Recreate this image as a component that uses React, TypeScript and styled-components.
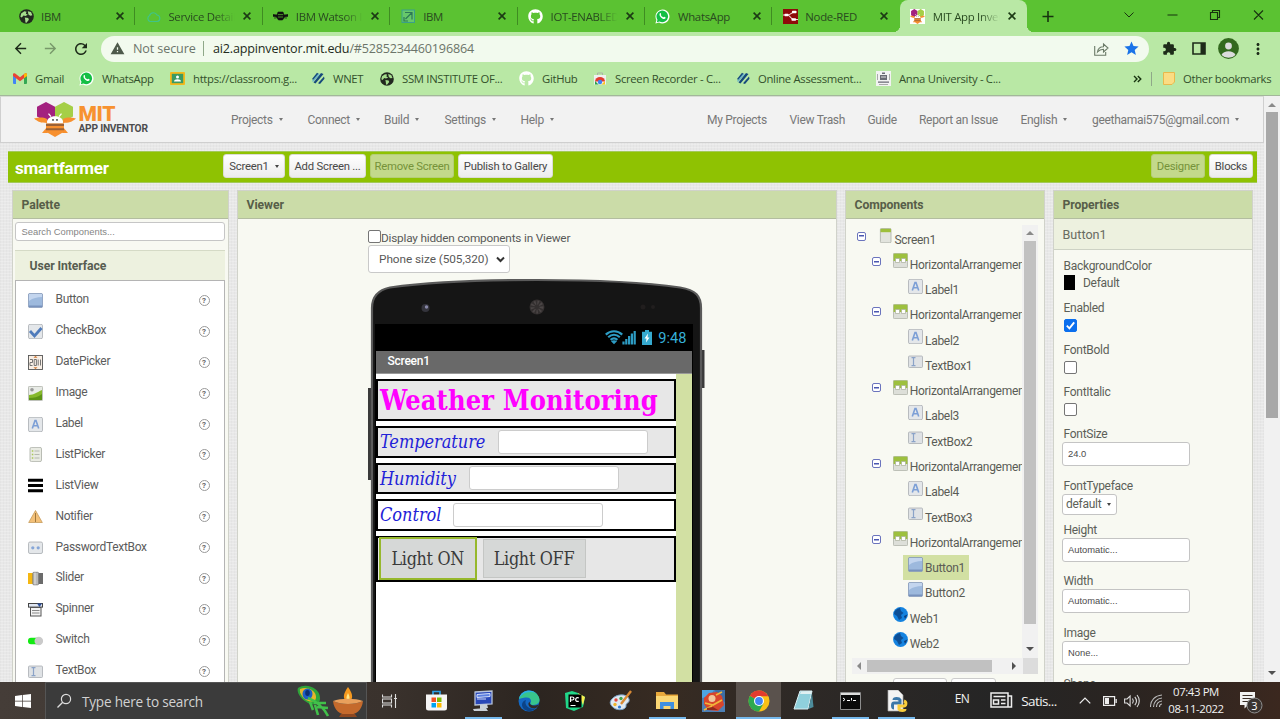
import React from "react";
import styled, { createGlobalStyle, css } from "styled-components";
import { FaGithub } from "react-icons/fa";
import {
  MdArrowBack, MdArrowForward, MdRefresh, MdWarning, MdStar, MdExtension, MdMoreVert,
} from "react-icons/md";

const UI = `"Open Sans", "Noto Sans", sans-serif`;
const BODY = `Roboto, "Liberation Sans", sans-serif`;
const SERIF = `"DejaVu Serif Condensed", "DejaVu Serif", serif`;

const Global = createGlobalStyle`
  *, *::before, *::after { box-sizing: border-box; }
  html, body { margin: 0; padding: 0; overflow: hidden; background: #2b2623; }
  svg { display: block; flex: none; }
`;

const Desktop = styled.div`
  width: 1280px;
  height: 719px;
  display: flex;
  flex-direction: column;
  overflow: hidden;
  font-family: ${BODY};
  white-space: nowrap;
`;

/* ---------- browser chrome ---------- */
const TabStrip = styled.div`
  height: 32px;
  background: #5bc232;
  padding-left: 8px;
  display: flex;
  font-family: ${UI};
`;
const Tab = styled.div<{ $active?: boolean; $last?: boolean }>`
  width: 127.4px;
  height: 32px;
  flex: none;
  padding-left: 10.5px;
  display: flex;
  align-items: center;
  position: relative;
  ${(p) => p.$active ? css`
    background: #b9e8a5;
    border-radius: 8px 8px 0 0;
    &::before, &::after {
      content: "";
      position: absolute;
      bottom: 0;
      width: 7px;
      height: 7px;
    }
    &::before { left: -7px; background: radial-gradient(circle at 0 0, transparent 7px, #b9e8a5 7.3px); }
    &::after { right: -7px; background: radial-gradient(circle at 100% 0, transparent 7px, #b9e8a5 7.3px); }
  ` : !p.$last && css`
    &::after { content: ""; position: absolute; right: 0; top: 7px; width: 1px; height: 18px; background: #3f8c22; }
  `}
`;
const TabTitle = styled.span<{ $fade?: boolean }>`
  width: 68px;
  margin-left: 7.5px;
  margin-right: 7px;
  overflow: hidden;
  font-size: 11.4px;
  letter-spacing: -0.3px;
  color: #294a20;
  ${(p) => p.$fade && css`
    -webkit-mask-image: linear-gradient(90deg, #000 70%, transparent 98%);
    mask-image: linear-gradient(90deg, #000 70%, transparent 98%);
  `}
`;
const WindowButtons = styled.div`
  display: flex;
  align-items: center;
  margin-left: 14px;
  padding-bottom: 3px;
`;
const NewTab = styled.span`
  margin-right: 69px;
  padding-top: 4px;
`;
const TabSearch = styled.span`
  margin-right: 22px;
`;
const Toolbar = styled.div`
  height: 32px;
  background: #b9e8a5;
  display: flex;
  align-items: center;
  padding: 1px 0 0 12px;
  color: #1d2b19;
  font-family: ${UI};
`;
const ToolSlot = styled.span<{ $w: number; $dim?: boolean; $pad?: number }>`
  width: ${(p) => p.$w}px;
  padding-left: ${(p) => p.$pad ?? 0}px;
  flex: none;
  display: flex;
  opacity: ${(p) => (p.$dim ? 0.42 : 1)};
`;
const Address = styled.div`
  width: 1048px;
  height: 26px;
  flex: none;
  border-radius: 13px;
  background: #f2faee;
  display: flex;
  align-items: center;
  padding: 0 9px 0 9px;
  font-size: 12.6px;
  color: #6c756a;
`;
const NotSecure = styled.span`
  margin-left: 8px;
  width: 70px;
  letter-spacing: -0.12px;
`;
const Divider = styled.span<{ $h: number; $m: number }>`
  width: 1px;
  height: ${(p) => p.$h}px;
  background: #8fa889;
  margin-right: ${(p) => p.$m}px;
`;
const Url = styled.span`
  flex: 1;
  letter-spacing: -0.19px;
  b { font-weight: 400; color: #232b21; }
`;
const Bookmarks = styled.div`
  height: 32px;
  background: #b9e8a5;
  border-bottom: 1px solid #a3b79b;
  padding: 0 0 2px 13px;
  display: flex;
  align-items: center;
  font-family: ${UI};
  font-size: 11.3px;
  color: #33502b;
`;
const Bookmark = styled.div<{ $w: number }>`
  width: ${(p) => p.$w}px;
  flex: none;
  display: flex;
  align-items: center;
  gap: 8px;
  letter-spacing: -0.3px;
`;
const More = styled.span`
  width: 18px;
`;

/* ---------- page ---------- */
const Page = styled.div`
  height: 586px;
  display: flex;
  overflow: hidden;
  background-color: #e8e8e8;
  background-image:
    repeating-linear-gradient(0deg, rgba(255,255,255,0.22) 0 1px, transparent 1px 3px),
    repeating-linear-gradient(90deg, rgba(0,0,0,0.018) 0 1px, transparent 1px 3px);
`;
const Main = styled.div`
  width: 1264px;
  display: flex;
  flex-direction: column;
`;
const Header = styled.header`
  height: 47px;
  flex: none;
  background: #f2f2f2;
  border: 1px solid #cfcfcf;
  border-top-color: #d8ddd5;
  display: flex;
  align-items: center;
  padding-left: 33px;
`;
const LogoText = styled.div`
  margin-left: 2.5px;
  width: 152.5px;
  padding-top: 1px;
`;
const Mit = styled.div`
  font: 900 21px/19px ${BODY};
  height: 18px;
  color: #f79230;
  letter-spacing: -0.3px;
`;
const AppInventor = styled.div`
  font: 700 10.2px/12px ${BODY};
  color: #4d4d4f;
  letter-spacing: -0.22px;
`;
const NavItem = styled.span<{ $w: number }>`
  width: ${(p) => p.$w}px;
  flex: none;
  font-size: 12px;
  letter-spacing: -0.3px;
  color: #787878;
  display: flex;
  align-items: center;
`;
const Caret = styled.i<{ $dark?: boolean }>`
  margin-left: 6px;
  border: 2.6px solid transparent;
  border-top: 3px solid ${(p) => (p.$dark ? "#444" : "#777")};
  border-bottom: 0;
`;
const ProjectBar = styled.div`
  margin: 8px 7px 7px 8px;
  height: 32px;
  flex: none;
  background: #8fc202;
  border: 1px solid #a3c95a;
  border-width: 1px 0;
  display: flex;
  align-items: center;
  gap: 4px;
  padding: 0 4px 2px 7px;
`;
const ProjectName = styled.span`
  width: 204px;
  padding-top: 4px;
  color: #fff;
  font-size: 17px;
  font-weight: 700;
  letter-spacing: -0.25px;
`;
const BarButton = styled.span<{ $w: number; $off?: boolean; $push?: boolean }>`
  width: ${(p) => p.$w}px;
  height: 24px;
  display: flex;
  align-items: center;
  justify-content: center;
  border-radius: 3px;
  font-size: 11.3px;
  letter-spacing: -0.22px;
  margin-left: ${(p) => (p.$push ? "auto" : 0)};
  color: ${(p) => (p.$off ? "#75923a" : "#484848")};
  background: ${(p) => (p.$off ? "#c3d98b" : "linear-gradient(#fff, #ececec)")};
  border: 1px solid ${(p) => (p.$off ? "#b5ce77" : "#dcdcd6")};
`;
const Columns = styled.div`
  display: flex;
  gap: 8px;
  padding-left: 11.5px;
  flex: 1;
`;
const Panel = styled.section<{ $w: number }>`
  width: ${(p) => p.$w}px;
  height: 520px;
  flex: none;
  background: #f8f9f2;
  border: 1px solid #d0d2ca;
  display: flex;
  flex-direction: column;
`;
const PanelTitle = styled.div`
  height: 28px;
  flex: none;
  background: #cbdca8;
  border-bottom: 1px solid #b3bda0;
  padding-left: 9px;
  display: flex;
  align-items: center;
  font-size: 12.2px;
  font-weight: 700;
  letter-spacing: -0.08px;
  color: #575e49;
`;

/* palette */
const Search = styled.div`
  height: 19px;
  margin: 3px 3px 0 2px;
  padding-left: 6px;
  border: 1px solid #c6c6c6;
  border-radius: 3px;
  background: #fff;
  font: 9.4px/17px "Liberation Sans", sans-serif;
  color: #858585;
`;
const Category = styled.div`
  height: 30px;
  margin: 9px 3px 0 2px;
  padding-left: 15px;
  background: #edf1df;
  border-top: 1px solid #d5dac6;
  font-size: 12.2px;
  line-height: 30px;
  font-weight: 700;
  letter-spacing: -0.08px;
  color: #575d51;
`;
const PaletteList = styled.div`
  margin: 0 3px 0 2px;
  flex: 1;
  background: #fff;
  border: 1px solid #b4b4b4;
  padding-top: 4px;
`;
const PaletteItem = styled.div`
  height: 30.9px;
  display: flex;
  align-items: center;
  padding: 0 14px 0 12px;
  font-size: 12px;
  letter-spacing: -0.32px;
  color: #5c5c5c;
  span { flex: 1; margin-left: 13px; padding-bottom: 2px; }
`;
const Help = styled.i`
  width: 11px;
  height: 11px;
  border: 1px solid #999;
  border-radius: 50%;
  font: 700 8px/9px ${BODY};
  letter-spacing: 0;
  text-align: center;
  color: #666;
`;

/* viewer */
const ViewerBody = styled.div`
  padding: 9px 0 0 130.5px;
  font-size: 11.8px;
  color: #595959;
`;
const CheckRow = styled.div`
  height: 17px;
  display: flex;
  align-items: center;
  letter-spacing: -0.2px;
`;
const CheckLabel = styled.span`
  padding-top: 3px;
`;
const Check = styled.i<{ $on?: boolean }>`
  width: 13px;
  height: 13px;
  flex: none;
  border: 1px solid ${(p) => (p.$on ? "#0b6fee" : "#757575")};
  border-radius: 2px;
  background: ${(p) => (p.$on ? "#0b6fee" : "#fff")};
`;
const SizeSelect = styled.div`
  width: 142px;
  height: 28px;
  border: 1px solid #c9c9c9;
  border-radius: 3px;
  background: #fff;
  display: flex;
  align-items: center;
  justify-content: space-between;
  padding: 0 4px 0 10px;
  letter-spacing: -0.05px;
`;
const Phone = styled.div`
  position: relative;
  width: 338px;
  height: 420px;
  margin-top: 5px;
  padding: 46px 13px 0 7px;
`;
const Shell = styled.svg`
  position: absolute;
  left: 0;
  top: 0;
`;
const Screen = styled.div`
  position: relative;
  background: #000;
  padding: 0 1px;
`;
const StatusBar = styled.div`
  height: 27px;
  display: flex;
  align-items: center;
  justify-content: flex-end;
  padding-right: 5.5px;
  color: #36b0d8;
  font-size: 14.6px;
  gap: 6px;
`;
const ScreenTitle = styled.div`
  height: 23px;
  background: #696969;
  color: #fff;
  font-size: 12px;
  font-weight: 500;
  letter-spacing: -0.25px;
  line-height: 20px;
  padding-left: 11.5px;
  border-bottom: 1px solid #999;
`;
const Canvas = styled.div`
  height: 330px;
  background: #fff;
  border-right: 16px solid #d2e0a3;
  padding-top: 5px;
  display: flex;
  flex-direction: column;
  gap: 5px;
`;
const Arrangement = styled.div<{ $h: number; $white?: boolean }>`
  height: ${(p) => p.$h}px;
  flex: none;
  border: 2px solid #000;
  background: ${(p) => (p.$white ? "#fff" : "#e7e7e7")};
  display: flex;
  align-items: center;
  padding-left: 2px;
  font-family: ${SERIF};
`;
const Heading = styled.span`
  color: #f0f;
  font-size: 27px;
  font-weight: 700;
  letter-spacing: 0.1px;
  padding-top: 1px;
`;
const FieldLabel = styled.span<{ $w: number }>`
  width: ${(p) => p.$w}px;
  color: #2222d8;
  font-size: 18px;
  font-style: italic;
  letter-spacing: -0.05px;
`;
const Field = styled.span`
  width: 150px;
  height: 24px;
  border: 1px solid #ccc;
  border-radius: 3px;
  background: #fff;
`;
const AppButton = styled.span<{ $w: number; $selected?: boolean }>`
  width: ${(p) => p.$w}px;
  height: ${(p) => (p.$selected ? 43 : 39)}px;
  margin: ${(p) => (p.$selected ? "0 5.5px 0 -1.5px" : "0")};
  display: flex;
  align-items: center;
  justify-content: center;
  background: #d6d8d7;
  border: ${(p) => (p.$selected ? "2px solid #96b82c" : "1px solid #c4c6c4")};
  color: #3a3a3a;
  font-size: 17.8px;
  letter-spacing: -0.3px;
`;

/* components tree */
const TreeArea = styled.div`
  display: flex;
  margin: 6px 6px 0 6px;
  height: 433px;
`;
const Tree = styled.div`
  width: 171px;
  overflow: hidden;
  padding-top: 1px;
`;
const TreeRow = styled.div<{ $depth: number; $leaf?: boolean }>`
  height: 25.27px;
  display: flex;
  align-items: center;
  padding-left: ${(p) => 5.5 + p.$depth * 15.2 + (p.$leaf ? 15.6 : 0)}px;
  font-size: 12px;
  color: #5a5c56;
`;
const Toggle = styled.i<{ $gap: number }>`
  width: 9px;
  height: 9px;
  flex: none;
  margin: -5px ${(p) => p.$gap}px 0 0;
  border: 1px solid #6b74bd;
  border-radius: 2px;
  background: linear-gradient(#4a57b0, #4a57b0) center / 5px 1.5px no-repeat #fff;
`;
const TreeNode = styled.span<{ $selected?: boolean }>`
  height: 25px;
  padding: 0 4px 0 5px;
  display: flex;
  align-items: center;
  gap: 2px;
  letter-spacing: -0.3px;
  background: ${(p) => (p.$selected ? "#d2e0a3" : "transparent")};
  svg { margin-top: -6px; }
  b { font-weight: 400; padding-top: 2px; }
`;
const VScroll = styled.div<{ $pad: number }>`
  width: 16px;
  flex: none;
  background: #f1f1f1;
  display: flex;
  flex-direction: column;
  align-items: center;
  padding: ${(p) => p.$pad}px 0 5px;
`;
const Thumb = styled.i<{ $h: number; $tone: string; $gap: number }>`
  width: 12px;
  height: ${(p) => p.$h}px;
  background: ${(p) => p.$tone};
  margin: ${(p) => p.$gap}px 0 auto;
`;
const HScroll = styled.div`
  height: 16px;
  flex: none;
  margin: 0 6px;
  background: linear-gradient(90deg, #f1f1f1 171px, #dcdcdc 171px);
  display: flex;
  align-items: center;
  padding: 0 20px 0 3px;
  i { width: 125px; height: 12px; background: #c1c1c1; margin: 0 auto 0 4px; }
`;
const TreeButtons = styled.div`
  display: flex;
  gap: 4px;
  padding: 4px 0 0 47.5px;
`;
const TreeButton = styled.span<{ $w: number }>`
  width: ${(p) => p.$w}px;
  height: 24px;
  border: 1px solid #ccc;
  border-radius: 3px;
  background: #fff;
`;

/* properties */
const Selected = styled.div`
  height: 31px;
  flex: none;
  background: #edf1df;
  border-bottom: 1px solid #cdd2c4;
  padding-left: 9px;
  line-height: 31px;
  font-size: 12.6px;
  color: #686b61;
`;
const Properties = styled.div`
  padding: 8px 0 0 8.5px;
  font-size: 12px;
  letter-spacing: -0.28px;
  color: #5c5f58;
`;
const Prop = styled.div<{ $h: number }>`
  height: ${(p) => p.$h}px;
`;
const PropLabel = styled.div`
  height: 16px;
  line-height: 16px;
  padding-left: 1.5px;
`;
const Colour = styled.div`
  display: flex;
  align-items: center;
  gap: 8px;
  height: 17px;
  padding-left: 2px;
  i { width: 11px; height: 15px; background: #000; }
`;
const PropCheck = styled.div`
  padding: 3px 0 0 2px;
  display: flex;
`;
const Input = styled.div`
  width: 127.5px;
  height: 24px;
  border: 1px solid #c4c4c4;
  border-radius: 3px;
  background: #fff;
  font: 9.4px/22px "Liberation Sans", sans-serif;
  letter-spacing: 0;
  padding-left: 5px;
  color: #4c4c4c;
`;
const Typeface = styled.div`
  width: 55px;
  height: 21px;
  border: 1px solid #c4c4c4;
  border-radius: 3px;
  background: #fff;
  display: flex;
  align-items: center;
  padding-left: 3px;
`;

/* ---------- taskbar ---------- */
const Taskbar = styled.div`
  height: 37px;
  flex: none;
  display: flex;
  align-items: center;
  color: #f2f2f2;
  font-family: ${UI};
  background: linear-gradient(90deg, #453d38 0, #3a322d 30%, #2c2520 42%, #372b22 52%, #2e2926 62%, #252525 78%, #2a2421 88%, #3b281f 100%);
`;
const SearchBox = styled.div`
  width: 322px;
  height: 37px;
  flex: none;
  background: #3b3b3b;
  border: 1px solid #555;
  border-bottom: 0;
  display: flex;
  align-items: center;
  padding-left: 10px;
  font-size: 13.6px;
  color: #d2d2d2;
  span { flex: 1; margin-left: 10px; letter-spacing: -0.22px; }
`;
const Slot = styled.span<{ $w: number; $on?: boolean; $open?: boolean; $pad?: number }>`
  width: ${(p) => p.$w}px;
  height: 37px;
  flex: none;
  padding-left: ${(p) => p.$pad ?? 0}px;
  display: flex;
  align-items: center;
  justify-content: center;
  background: ${(p) => (p.$on ? "#5a524d" : "transparent")};
  background-image: ${(p) => (p.$open ? "linear-gradient(#76b9ed, #76b9ed)" : "none")};
  background-size: ${(p) => (p.$on ? "100%" : "37px")} 2.5px;
  background-position: bottom center;
  background-repeat: no-repeat;
`;
const Language = styled.span`
  font-size: 12px;
  letter-spacing: -0.5px;
  padding-bottom: 4px;
`;
const News = styled.span`
  font-size: 13.5px;
  letter-spacing: -0.6px;
`;
const Clock = styled.div`
  width: 60px;
  flex: none;
  text-align: center;
  font-size: 11.4px;
  line-height: 16.5px;
  letter-spacing: -0.4px;
`;

/* ---------- drawings ---------- */
const Cross = () => (
  <svg width="8" height="8" viewBox="0 0 8 8"><path d="M.6.6l6.8 6.8M7.4.6L.6 7.4" stroke="#1c3a14" strokeWidth="1.6" /></svg>
);
const Globe = ({ s = 14 }) => (
  <svg width={s} height={s} viewBox="0 0 14 14">
    <circle cx="7" cy="7" r="6.8" fill="#22281f" />
    <path d="M2 4.2l3-2 2 .4-.6 1.800 1.800 1-2.200 1.200-1.800-.5L2.600 8 1.300 7.200zM8.200 2l3 .9 1.300 3-2 .4-1.700-1.200zM5.400 8l3.200.4.6 1.600-2.200 2.800-1-.2L5.800 10z" fill="#a5dd8c" />
  </svg>
);
const WhatsApp = () => (
  <svg width="15" height="15" viewBox="0 0 15 15">
    <path d="M.4 14.600l1-3.600A7 7 0 1 1 4 13.600z" fill="#fff" />
    <path d="M1.800 13.200l.7-2.500A5.800 5.800 0 1 1 4.500 12.500z" fill="#14bf45" />
    <path d="M4.800 4.300c.5-.6 1-.3 1.300.6.2.7-.4.9-.1 1.400.6 1 1.200 1.500 2.200 2 .5.200.7-.7 1.100-.6 1.600.6 1.500.8 1.200 1.500-.5.900-2 .9-3.200.2C5.500 8.500 3.800 6.300 4.800 4.300z" fill="#fff" />
  </svg>
);
const Github = () => <FaGithub size={15} color="#fff" />;
const Stripes = () => (
  <svg width="14" height="13" viewBox="0 0 14 13">
    <path d="M1 7L6 .8 8 2 3 8.500zM10 1l2.500 1-8 9.500L2.500 10.500zM13 4.500l.5 2.200-4.500 5.300-2-.7z" fill="#174a7c" />
    <path d="M1 9L7.500 1.500 9 2 2 10z" fill="#6fb6c8" />
  </svg>
);
const Gmail = () => (
  <svg width="14" height="11" viewBox="0 0 14 11">
    <path d="M0 1.500V10a1 1 0 0 0 1 1h2V4z" fill="#4285f4" />
    <path d="M14 1.500V10a1 1 0 0 1-1 1h-2V4z" fill="#34a853" />
    <path d="M0 1.500C0 .2 1.200-.2 2.200.5L7 4.200 11.800.5C12.800-.2 14 .2 14 1.500V3L7 8.200 0 3z" fill="#ea4335" />
    <path d="M11 1.200l.8-.7C12.800-.2 14 .2 14 1.500V3l-3 2.200z" fill="#fbbc04" />
  </svg>
);
const Classroom = () => (
  <svg width="15" height="13" viewBox="0 0 15 13">
    <rect width="15" height="13" rx="1" fill="#f4b81c" /><rect x="1.800" y="1.800" width="11.400" height="9.400" fill="#3c9a62" />
    <circle cx="7.500" cy="5" r="1.500" fill="#fff" /><path d="M4 9.400c0-3 7-3 7 0z" fill="#fff" />
  </svg>
);
const Recorder = () => (
  <svg width="14" height="14" viewBox="0 0 14 14">
    <path d="M1 3h12v9.500H1z" fill="#f0f0f0" /><path d="M4.500 3V1h5v2" stroke="#a9b5a5" fill="none" />
    <path d="M2 9.500a5 4.500 0 0 1 10 0z" fill="#e23b2e" /><path d="M2 9l3.500 3.500H2z" fill="#2ba24c" /><path d="M12 9l-3.500 3.500H12z" fill="#fcc31e" /><circle cx="7" cy="10" r="2.200" fill="#3f83f0" />
  </svg>
);
const Crest = () => (
  <svg width="15" height="15" viewBox="0 0 15 15">
    <path d="M0 0h15v15H0z" fill="#f2f2f2" />
    <path d="M4 4h7v5H4zM2 10.500h11v1.300H2zM6 1.500h3v1.500H6z" fill="#6a6a74" /><path d="M1.500 3v6M13.500 3v6M3 13.500h9" stroke="#aaa" /><path d="M5 6h5" stroke="#ddd" />
  </svg>
);
const Cloud = () => (
  <svg width="15" height="13" viewBox="0 0 15 13"><path d="M4 11.500a3.300 3.300 0 0 1-.4-6A4 4 0 0 1 11 5a3.300 3.300 0 0 1 .2 6.500z" fill="none" stroke="#3bc49a" strokeWidth="1.200" opacity=".85" /></svg>
);
const Bee = () => (
  <svg width="15" height="10" viewBox="0 0 15 10"><path d="M0 3.500l4 .5L5 1h5l1 3 4-.5v1.800l-3.500.7L9.500 9h-4L3.500 6 0 5.300zM1 7h2.500M11.500 7H14" fill="#111" stroke="#111" strokeWidth=".6" /><path d="M5 3.600h5M5 6h5" stroke="#5bc232" strokeWidth=".7" /></svg>
);
const Report = () => (
  <svg width="15" height="15" viewBox="0 0 15 15"><rect x="1" y="1" width="12.500" height="12.500" fill="#67c86a" stroke="#3a9f8a" /><path d="M4 3.500h7v7M11 3.500L4.500 10M3 8v4h4" fill="none" stroke="#2c7a55" strokeWidth="1.200" /></svg>
);
const NodeRed = () => (
  <svg width="15" height="15" viewBox="0 0 15 15"><rect width="15" height="15" fill="#8f0a0a" /><path d="M0 6h4c4 0 3 4.500 7 4.500h4M5 6c3 0 3-3 7-3" stroke="#f2d6d6" strokeWidth="1.100" fill="none" /><rect x="1.500" y="4.800" width="4" height="2.400" rx=".6" fill="#fff" /><rect x="8.500" y="9.300" width="4.500" height="2.400" rx=".6" fill="#fff" /><rect x="9" y="1.800" width="4.500" height="2.400" rx=".6" fill="#fff" /></svg>
);
const AppInventorLogo = ({ w, h, box }: { w: number; h: number; box?: boolean }) => (
  <svg width={w} height={h} viewBox="0 0 42 36" preserveAspectRatio="none">
    {box && <path d="M0 0h42v36H0z" fill="#fff" />}
    <path d="M12 0l9 5v10l-9 5-9-5V5z" fill="#a3217f" />
    <path d="M30 0l9 5v10l-9 5-9-5V5z" fill="#a5cf47" />
    <path d="M0 17c5-1.500 9-1.500 13 .5v4c-6 0-9-1-13-4.500zM42 17c-5-1.500-9-1.500-13 .5v4c6 0 9-1 13-4.500z" fill="#f7902f" />
    <path d="M12 27l-4 5h6zM30 27l4 5h-6z" fill="#f7902f" />
    <path d="M12 22h18v8.500l-9 5.500-9-5.500z" fill="#f7902f" />
    <path d="M12 23.500h18M12 28h18" stroke="#9a6136" strokeWidth="2.200" />
    <path d="M13.500 21.500c-2.500-9 17.500-9 15 0z" fill="#fff" /><path d="M17 15l-2.500-3M25 15l2.500-3" stroke="#fff" strokeWidth="1.300" />
    <circle cx="19" cy="18.500" r=".9" fill="#333" /><circle cx="23" cy="18.500" r=".9" fill="#333" />
  </svg>
);

type Kind = "button" | "check" | "date" | "image" | "label" | "listpicker" | "listview" | "notifier" | "password" | "slider" | "spinner" | "switch" | "textbox" | "screen" | "harr" | "web";
const plate = <rect x=".5" y=".3" width="14" height="14.400" rx="1.500" fill="#e4e7ea" stroke="#a9adb2" strokeWidth=".8" />;
const art: Record<Kind, React.ReactNode> = {
  button: <><rect x=".4" y=".4" width="14.200" height="14.200" rx="1.500" fill="#9db9dd" stroke="#8094b5" strokeWidth=".8" /><path d="M1 8V1h13v3C9 4 5 5 1 8z" fill="#c3d5ee" /><path d="M1 12.500h13V14H1z" fill="#7892bd" /></>,
  check: <>{plate}<path d="M2 7l4.500 5L13.500 4" fill="none" stroke="#4f7bbb" strokeWidth="2.800" /></>,
  date: <><rect x=".5" y=".5" width="14" height="14" fill="#f8efe6" stroke="#555" strokeWidth=".9" /><path d="M2 4.500h2.500v3H2v3h2.500M6.200 4.500h2.200v6H6.200zM10.200 4.500v6M12.500 4.500v6" fill="none" stroke="#666" strokeWidth=".9" /><path d="M7.500.8l2 2h-4zM7.500 14.200l2-2h-4z" fill="#d07c3a" /></>,
  image: <><rect x=".4" y=".4" width="14.200" height="14.200" rx="1" fill="#e8ebe6" stroke="#a9ada5" strokeWidth=".8" /><path d="M1 9c5 0 8-3 13-5v10H1z" fill="#86b92b" /><path d="M1 12c5 0 9-1 13-4v6H1z" fill="#5d9416" /><circle cx="4" cy="3.800" r="1.800" fill="#999" /></>,
  label: <>{plate}<path d="M4.300 11.500L7 3.500h1l2.700 8M5.300 8.800h4.400" fill="none" stroke="#7c9fd6" strokeWidth="1.600" /></>,
  listpicker: <><rect x="2" y=".4" width="11.500" height="14.200" rx="1.500" fill="#e9ebe3" stroke="#a9ada5" strokeWidth=".8" /><path d="M6.500 4h5M6.500 7.500h5M6.500 11h5" stroke="#b5b8b0" /><path d="M3.800 4h1.500M3.800 7.500h1.500M3.800 11h1.500" stroke="#a9c658" strokeWidth="1.500" /></>,
  listview: <path d="M0 2.300h15M0 7.500h15M0 12.700h15" stroke="#000" strokeWidth="3" />,
  notifier: <><path d="M7.500 1.500l6.800 12H.7z" fill="#f3c078" stroke="#c79c5c" strokeWidth=".8" /><path d="M7.500 4v9" stroke="#a0773c" strokeWidth="1" /></>,
  password: <><rect x=".5" y="2" width="14" height="11.500" rx="1.500" fill="#e4e7ea" stroke="#a9adb2" strokeWidth=".8" /><circle cx="4.800" cy="7.800" r="1.600" fill="#86a6d8" /><circle cx="10.200" cy="7.800" r="1.600" fill="#86a6d8" /></>,
  slider: <><rect y="2" width="5" height="11" fill="#f5b712" /><rect x="10" y="2" width="5" height="11" fill="#6b6b6b" /><rect x="4.800" y="1.300" width="5.800" height="12.500" rx="1" fill="#b9b9b9" stroke="#777" strokeWidth=".8" /><path d="M7 1.500v12" stroke="#e2e2e2" /></>,
  spinner: <><rect x=".5" y="1.500" width="14" height="3.600" fill="#dfe6f2" stroke="#444" /><rect x="2.500" y="5.500" width="10.500" height="8.500" fill="#f4f4f4" stroke="#555" /><path d="M4 8.500h7.500M4 11h7.500" stroke="#888" /><path d="M9 1.500h5L11.500 5z" fill="#2b4f9b" /></>,
  switch: <><rect y="4.700" width="12" height="6.600" rx="3" fill="#12ea12" /><circle cx="10.800" cy="8" r="4.300" fill="#cacaca" /></>,
  textbox: <><rect x=".5" y="2" width="14" height="11.500" rx="1" fill="#dfe2e5" stroke="#a9adb2" strokeWidth=".8" /><path d="M3.500 3.700h4M5.500 3.700v8M3.500 11.700h4" stroke="#8ba3c8" strokeWidth="1.200" /></>,
  screen: <><rect x="2.400" y=".4" width="10.600" height="14.400" rx="1.200" fill="#e2e4de" stroke="#a9ada5" strokeWidth=".8" /><path d="M2.500.8h10.400v3.400H2.500z" fill="#9dbf3c" /></>,
  harr: <><rect x=".4" y=".4" width="14.200" height="14.200" rx="1" fill="#dddfd9" stroke="#a9ada5" strokeWidth=".8" /><path d="M.6.600h13.800V8H.6z" fill="#9dc03e" /><path d="M2.500 5.500h4v4h-4zM8.500 5.500h4v4h-4z" fill="#fff" stroke="#a8ad9a" strokeWidth=".7" /></>,
  web: <><circle cx="7.500" cy="7.500" r="7.400" fill="#1483e0" /><path d="M7 .8C3 2 1 4.500 1 7l3 2 2 4 3-2-1-3 2.500-2L8 4z" fill="#0b3e7e" opacity=".75" /><path d="M11 9l3.500-1.500L12 12z" fill="#0b3e7e" /></>,
};
const Glyph = ({ kind }: { kind: Kind }) => <svg width="15" height="15" viewBox="0 0 15 15">{art[kind]}</svg>;

const arrows = { up: "M0 6l4-4 4 4z", down: "M0 2l4 4 4-4z", left: "M6 0L2 4l4 4z", right: "M2 0l4 4-4 4z" };
const Arrow = ({ dir, c = "#505050" }: { dir: keyof typeof arrows; c?: string }) => (
  <svg width="8" height="8" viewBox="0 0 8 8"><path d={arrows[dir]} fill={c} /></svg>
);

/* ---------- data ---------- */
const tabs: { title: string; icon: React.ReactNode; fade?: boolean }[] = [
  { title: "IBM", icon: <Globe s={15} /> },
  { title: "Service Details", icon: <Cloud />, fade: true },
  { title: "IBM Watson IoT", icon: <Bee />, fade: true },
  { title: "IBM", icon: <Report /> },
  { title: "IOT-ENABLED-", icon: <Github />, fade: true },
  { title: "WhatsApp", icon: <WhatsApp /> },
  { title: "Node-RED", icon: <NodeRed /> },
  { title: "MIT App Inventor", icon: <AppInventorLogo w={15} h={15} box />, fade: true },
];
const bookmarks: [string, number, React.ReactNode][] = [
  ["Gmail", 66, <Gmail />],
  ["WhatsApp", 91, <WhatsApp />],
  ["https://classroom.g...", 141, <Classroom />],
  ["WNET", 69, <Stripes />],
  ["SSM INSTITUTE OF...", 139, <Globe />],
  ["GitHub", 74, <Github />],
  ["Screen Recorder - C...", 143, <Recorder />],
  ["Online Assessment...", 140, <Stripes />],
  ["Anna University - C...", 257, <Crest />],
];
const palette: [Kind, string][] = [
  ["button", "Button"], ["check", "CheckBox"], ["date", "DatePicker"], ["image", "Image"], ["label", "Label"],
  ["listpicker", "ListPicker"], ["listview", "ListView"], ["notifier", "Notifier"], ["password", "PasswordTextBox"],
  ["slider", "Slider"], ["spinner", "Spinner"], ["switch", "Switch"], ["textbox", "TextBox"],
];
const tree: [number, Kind, string][] = [
  [0, "screen", "Screen1"],
  [1, "harr", "HorizontalArrangement1"], [2, "label", "Label1"],
  [1, "harr", "HorizontalArrangement2"], [2, "label", "Label2"], [2, "textbox", "TextBox1"],
  [1, "harr", "HorizontalArrangement3"], [2, "label", "Label3"], [2, "textbox", "TextBox2"],
  [1, "harr", "HorizontalArrangement4"], [2, "label", "Label4"], [2, "textbox", "TextBox3"],
  [1, "harr", "HorizontalArrangement5"], [2, "button", "Button1"], [2, "button", "Button2"],
  [1, "web", "Web1"], [1, "web", "Web2"],
];

const Browser = () => (
  <>
    <TabStrip>
      {tabs.map((t, i) => (
        <Tab key={i} $active={i === 7} $last={i === 6}>
          {t.icon}
          <TabTitle $fade={t.fade}>{t.title}</TabTitle>
          <Cross />
        </Tab>
      ))}
      <WindowButtons>
        <NewTab><svg width="14" height="11" viewBox="-1.500 0 14 11"><path d="M5.500 0v11M0 5.500h11" stroke="#17330f" strokeWidth="1.600" /></svg></NewTab>
        <TabSearch><svg width="10" height="6" viewBox="0 0 10 6"><path d="M.5.500L5 5 9.500.500" fill="none" stroke="#17330f" /></svg></TabSearch>
        <svg width="120" height="12" viewBox="0 0 120 12">
          <path d="M11.500 6h10M54.500 3.500h7v7h-7zM56.500 3.500V1.500h7v7h-2M98 1.500l9 9M107 1.500l-9 9" fill="none" stroke="#17330f" strokeWidth="1.100" />
        </svg>
      </WindowButtons>
    </TabStrip>
    <Toolbar>
      <ToolSlot $w={30}><MdArrowBack size={17} /></ToolSlot>
      <ToolSlot $w={30} $dim><MdArrowForward size={17} /></ToolSlot>
      <ToolSlot $w={29}><MdRefresh size={18} /></ToolSlot>
      <Address>
        <MdWarning size={15} color="#4e5a4b" />
        <NotSecure>Not secure</NotSecure>
        <Divider $h={15} $m={9} />
        <Url><b>ai2.appinventor.mit.edu</b>/#5285234460196864</Url>
        <ToolSlot $w={29}>
          <svg width="15" height="14" viewBox="0 0 15 14"><path d="M.7 4v9.300h11V10M3.500 10c.5-4 3-5.200 6-5.200V2l4.500 4-4.500 4V7.300c-2.500 0-4.300.7-6 2.700z" fill="none" stroke="#6b7a67" strokeWidth="1.100" /></svg>
        </ToolSlot>
        <MdStar size={17} color="#1a73e8" />
      </Address>
      <ToolSlot $w={43} $pad={12.5}><MdExtension size={15} /></ToolSlot>
      <ToolSlot $w={26}><svg width="14" height="13" viewBox="0 0 14 13"><path d="M1 1h12v11H1z" fill="none" stroke="#1d2b19" strokeWidth="1.600" /><path d="M8.500 1h4.500v11H8.500z" fill="#1d2b19" /></svg></ToolSlot>
      <ToolSlot $w={31}><svg width="21" height="21" viewBox="0 0 21 21"><circle cx="10.500" cy="10.500" r="10.400" fill="#33691e" /><circle cx="10.500" cy="8" r="3.400" fill="#dcdcdc" /><path d="M3.500 17c2-5 12-5 14 0a10 10 0 0 1-14 0z" fill="#dcdcdc" /></svg></ToolSlot>
      <MdMoreVert size={18} />
    </Toolbar>
    <Bookmarks>
      {bookmarks.map(([t, w, icon]) => (
        <Bookmark key={t} $w={w}>{icon}<span>{t}</span></Bookmark>
      ))}
      <More><svg width="9" height="8" viewBox="0 0 9 8"><path d="M1 1l3 3-3 3M4.800 1l3 3-3 3" fill="none" stroke="#17330f" strokeWidth="1.400" /></svg></More>
      <Divider $h={14} $m={11} />
      <Bookmark $w={110}>
        <svg width="12" height="13" viewBox="0 0 12 13"><path d="M.5.500h11V10L9 12.500H.500z" fill="#fbdc83" stroke="#e9b84c" /></svg>
        <span>Other bookmarks</span>
      </Bookmark>
    </Bookmarks>
  </>
);

const PhoneView = () => (
  <Phone>
    <Shell width="338" height="420" viewBox="0 0 338 420">
      <path d="M0 110h4v92H0zM333 72h3.500v38H333z" fill="#3a3a3a" />
      <path d="M4 420V30C4 18 10 12 22 9.500 70 3 120 2 169 2S268 3 312 9.500c16 2.500 21 8.500 21 20.500v390z" fill="#151515" stroke="#5a5a5a" strokeWidth="2.200" />
      <circle cx="57.500" cy="30" r="4" fill="#34343c" /><circle cx="58.500" cy="29" r="1.700" fill="#8888a8" />
      <circle cx="169" cy="29" r="7.500" fill="#332f2f" /><circle cx="169" cy="29" r="4.500" fill="none" stroke="#4a4545" strokeDasharray="1.500 1.500" strokeWidth="4" />
      <circle cx="275" cy="29" r="2.500" fill="#211e1e" /><circle cx="285" cy="29" r="2" fill="#211e1e" />
    </Shell>
    <Screen>
      <StatusBar>
        <svg width="31" height="15" viewBox="0 0 31 15">
          <path d="M.8 4.600c4.700-4.500 11.700-4.500 16.400 0M3.200 7.300c3.500-3.300 8-3.300 11.600 0M5.600 9.900c2.200-2 4.600-2 6.800 0" fill="none" stroke="#2d9cc4" strokeWidth="2.200" /><path d="M9 14.300L6 11.200c1.800-1.300 4.200-1.300 6 0z" fill="#2d9cc4" />
          <path d="M18.500 14.500v-3M21.300 14.500V9M24.100 14.500V6M26.900 14.500V3.500M29.700 14.500V1" stroke="#2d9cc4" strokeWidth="2.200" />
        </svg>
        <svg width="10" height="15" viewBox="0 0 10 15"><path d="M0 1.800h3V0h4v1.800h3V15H0z" fill="#36a9cf" /><path d="M6 3.500L2.500 8.500h2l-.5 4 3.500-5H5.500z" fill="#fff" /></svg>
        <span>9:48</span>
      </StatusBar>
      <ScreenTitle>Screen1</ScreenTitle>
      <Canvas>
        <Arrangement $h={42}><Heading>Weather Monitoring</Heading></Arrangement>
        <Arrangement $h={31.5}><FieldLabel $w={117.5}>Temperature</FieldLabel><Field /></Arrangement>
        <Arrangement $h={31.5}><FieldLabel $w={88.5}>Humidity</FieldLabel><Field /></Arrangement>
        <Arrangement $h={31.5} $white><FieldLabel $w={72.5}>Control</FieldLabel><Field /></Arrangement>
        <Arrangement $h={46.5}>
          <AppButton $w={98.5} $selected>Light ON</AppButton>
          <AppButton $w={103}>Light OFF</AppButton>
        </Arrangement>
      </Canvas>
    </Screen>
  </Phone>
);

const Site = () => (
  <Page>
    <Main>
      <Header>
        <AppInventorLogo w={42} h={35} />
        <LogoText><Mit>MIT</Mit><AppInventor>APP INVENTOR</AppInventor></LogoText>
        <NavItem $w={76.5}>Projects<Caret /></NavItem>
        <NavItem $w={76.5}>Connect<Caret /></NavItem>
        <NavItem $w={60.5}>Build<Caret /></NavItem>
        <NavItem $w={76}>Settings<Caret /></NavItem>
        <NavItem $w={186.5}>Help<Caret /></NavItem>
        <NavItem $w={82.5}>My Projects</NavItem>
        <NavItem $w={78}>View Trash</NavItem>
        <NavItem $w={51.5}>Guide</NavItem>
        <NavItem $w={101.5}>Report an Issue</NavItem>
        <NavItem $w={71.5}>English<Caret /></NavItem>
        <NavItem $w={160}>geethamai575@gmail.com<Caret /></NavItem>
      </Header>
      <ProjectBar>
        <ProjectName>smartfarmer</ProjectName>
        <BarButton $w={62}>Screen1<Caret $dark /></BarButton>
        <BarButton $w={77}>Add Screen ...</BarButton>
        <BarButton $w={84} $off>Remove Screen</BarButton>
        <BarButton $w={95}>Publish to Gallery</BarButton>
        <BarButton $w={54} $off $push>Designer</BarButton>
        <BarButton $w={44}>Blocks</BarButton>
      </ProjectBar>
      <Columns>
        <Panel $w={217}>
          <PanelTitle>Palette</PanelTitle>
          <Search>Search Components...</Search>
          <Category>User Interface</Category>
          <PaletteList>
            {palette.map(([k, t]) => (
              <PaletteItem key={t}><Glyph kind={k} /><span>{t}</span><Help>?</Help></PaletteItem>
            ))}
          </PaletteList>
        </Panel>
        <Panel $w={600}>
          <PanelTitle>Viewer</PanelTitle>
          <ViewerBody>
            <CheckRow><Check /><CheckLabel>Display hidden components in Viewer</CheckLabel></CheckRow>
            <SizeSelect>
              Phone size (505,320)
              <svg width="9" height="7" viewBox="0 0 9 7"><path d="M1 1.500l3.500 3.500L8 1.500" fill="none" stroke="#333" strokeWidth="2" /></svg>
            </SizeSelect>
            <PhoneView />
          </ViewerBody>
        </Panel>
        <Panel $w={200}>
          <PanelTitle>Components</PanelTitle>
          <TreeArea>
            <Tree>
              {tree.map(([d, k, t]) => {
                const leaf = d === 2 || k === "web";
                return (
                  <TreeRow key={t} $depth={d} $leaf={leaf}>
                    {!leaf && <Toggle $gap={6.5} />}
                    <TreeNode $selected={t === "Button1"}><Glyph kind={k} /><b>{t}</b></TreeNode>
                  </TreeRow>
                );
              })}
            </Tree>
            <VScroll $pad={4}><Arrow dir="up" c="#8a8a8a" /><Thumb $h={383} $tone="#c1c1c1" $gap={4} /><Arrow dir="down" /></VScroll>
          </TreeArea>
          <HScroll><Arrow dir="left" c="#8a8a8a" /><i /><Arrow dir="right" /></HScroll>
          <TreeButtons><TreeButton $w={54} /><TreeButton $w={45} /></TreeButtons>
        </Panel>
        <Panel $w={200}>
          <PanelTitle>Properties</PanelTitle>
          <Selected>Button1</Selected>
          <Properties>
            <Prop $h={42}><PropLabel>BackgroundColor</PropLabel><Colour><i />Default</Colour></Prop>
            <Prop $h={42}>
              <PropLabel>Enabled</PropLabel>
              <PropCheck><Check $on><svg width="11" height="11" viewBox="0 0 11 11"><path d="M1.800 5.700l2.600 2.600 4.800-6" fill="none" stroke="#fff" strokeWidth="1.900" /></svg></Check></PropCheck>
            </Prop>
            <Prop $h={42}><PropLabel>FontBold</PropLabel><PropCheck><Check /></PropCheck></Prop>
            <Prop $h={42}><PropLabel>FontItalic</PropLabel><PropCheck><Check /></PropCheck></Prop>
            <Prop $h={51.5}><PropLabel>FontSize</PropLabel><Input>24.0</Input></Prop>
            <Prop $h={44}><PropLabel>FontTypeface</PropLabel><Typeface>default<Caret $dark /></Typeface></Prop>
            <Prop $h={51.5}><PropLabel>Height</PropLabel><Input>Automatic...</Input></Prop>
            <Prop $h={51.5}><PropLabel>Width</PropLabel><Input>Automatic...</Input></Prop>
            <Prop $h={51.5}><PropLabel>Image</PropLabel><Input>None...</Input></Prop>
            <Prop $h={40}><PropLabel>Shape</PropLabel></Prop>
          </Properties>
        </Panel>
      </Columns>
    </Main>
    <VScroll $pad={5}><Arrow dir="up" c="#8a8a8a" /><Thumb $h={306} $tone="#a8a8a8" $gap={3} /><Arrow dir="down" /></VScroll>
  </Page>
);

const WinBar = () => (
  <Taskbar>
    <Slot $w={45}><svg width="16" height="14" viewBox="0 0 16 14"><path d="M0 2l7-1v5.700H0zM7.700.900L16 0v6.700H7.700zM0 7.400h7v5.700l-7-1zM7.700 7.400H16V14l-8.300-1z" fill="#fff" /></svg></Slot>
    <SearchBox>
      <svg width="16" height="16" viewBox="0 0 16 16"><circle cx="10" cy="6" r="4.600" fill="none" stroke="#ddd" strokeWidth="1.200" /><path d="M6.700 9.300L1.500 14.500" stroke="#ddd" strokeWidth="1.300" /></svg>
      <span>Type here to search</span>
      <svg width="70" height="33" viewBox="0 0 70 33">
        <path d="M2 3c9-6 23 1 22 11 0 5-7 7-12 4C6 15 0 8 2 3z" fill="#2ea53a" />
        <path d="M4 4c8-3 16 2 16 8s-7 5-10 3-7-7-6-11z" fill="#e5b52b" /><ellipse cx="11.500" cy="9" rx="5" ry="5.500" fill="#1c5fc4" /><ellipse cx="11.500" cy="8" rx="2.300" ry="3" fill="#0c2f73" />
        <path d="M12 13c8 3 16 10 20 18M18 18l12 0M21 22l11 1M14 17l3 8M19 20l3 10" stroke="#41c04a" strokeWidth="2.600" fill="none" />
        <path d="M52 2c5 7 6 12 0 16-6-4-5-9 0-16z" fill="#f79a1f" /><path d="M52 8c2 4 2 6 0 8-2-2-2-4 0-8z" fill="#ffe88a" />
        <path d="M37 16c8 4 22 4 30 0-1 9-7 14-15 14s-14-5-15-14z" fill="#c56a2c" /><path d="M37 16c8-3 22-3 30 0-8 4-22 4-30 0z" fill="#e9a05c" /><path d="M45 29h14l2 3H43z" fill="#8f4820" />
      </svg>
    </SearchBox>
    <Slot $w={46}><svg width="16" height="14" viewBox="0 0 16 14"><path d="M.5.500v2.500h9V.500M.5 13.500V11h9v2.500M.5 5h9v4h-9zM13.500 0v14M12 4.500h3" fill="none" stroke="#ddd" strokeWidth="1.100" /></svg></Slot>
    <Slot $w={47}><svg width="21" height="21" viewBox="0 0 21 21"><path d="M7 5V1.500h7V5" fill="none" stroke="#2c9fe6" strokeWidth="1.700" /><path d="M0 4.500h21V18a2.500 2.500 0 0 1-2.500 2.500h-16A2.500 2.500 0 0 1 0 18z" fill="#f5f5f5" /><path d="M5.500 7.500H10V12H5.500z" fill="#f25022" /><path d="M11 7.500h4.500V12H11z" fill="#7fba00" /><path d="M5.500 13H10v4.500H5.500z" fill="#00a4ef" /><path d="M11 13h4.500v4.500H11z" fill="#ffb900" /></svg></Slot>
    <Slot $w={46} $open><svg width="23" height="22" viewBox="0 0 23 22"><path d="M3 2l17-1v13L3 15z" fill="#2847b8" stroke="#b9c5da" strokeWidth="1.300" /><path d="M5 4.500l13-1v3l-13 1zM5 9h9" stroke="#d5e0fa" fill="#5a7ee0" /><path d="M8 15l7-1 1 4-8 1zM1 19l13-1 2 3H2z" fill="#c9d0d8" /></svg></Slot>
    <Slot $w={46}><svg width="22" height="22" viewBox="0 0 22 22"><circle cx="11" cy="11" r="10.500" fill="#1468c4" /><path d="M1 9C3-1 19-2 21.500 9c.5 4-2.500 6-6 6-2.500 0-3.500-1-3-2 1.500-2.500 0-5.500-4-5.500C5 7.500 1.500 9 1 9z" fill="#38c48c" /><path d="M1 9C3-1 14-1 18 3 10 0 3 4 1 9z" fill="#2bb3e6" /><path d="M8 10c-2 4 1 9 9 9-3 3-9 3-12-1-2-3-1-7 3-8z" fill="#0c4387" /><path d="M12 11.500c-1 3 2 4.500 5 4 2 0 3.500-1 4-1.500-.5 2-2 4-4 4.500-5 0-7-3-6.500-5.500z" fill="#322a25" /></svg></Slot>
    <Slot $w={46}><svg width="22" height="22" viewBox="0 0 22 22"><path d="M1 3l7-2 6 2 7 4-2 10-9 4-8-3z" fill="#21d789" /><path d="M14 3l7 4-2 8z" fill="#f9ee50" /><path d="M4.500 4.500h13v13h-13z" fill="#000" /><path d="M6.500 12V7h1.700c2.400 0 2.400 3 0 3H6.500M14.800 8c-3.300-2.300-5 4.800 0 3.200M6.500 15.500h5" fill="none" stroke="#fff" strokeWidth="1.200" /></svg></Slot>
    <Slot $w={46}><svg width="24" height="22" viewBox="0 0 24 22"><path d="M3 9c4-5 15-6 17 0 1 4-3 4-3 6 1 5-8 6-12 3S0 12 3 9z" fill="#dfe9f2" stroke="#7aa3c9" /><circle cx="7" cy="10" r="1.700" fill="#e2453c" /><circle cx="12" cy="8.500" r="1.700" fill="#3fa34d" /><circle cx="6" cy="14.500" r="1.700" fill="#f0b429" /><circle cx="10.500" cy="17" r="1.600" fill="#2f78d0" /><path d="M22 1L12 14" stroke="#d98a35" strokeWidth="2.400" /></svg></Slot>
    <Slot $w={46} $open><svg width="22" height="19" viewBox="0 0 22 19"><path d="M0 1h8l2 2.500h12V18H0z" fill="#e9a93c" /><path d="M0 5h22v13H0z" fill="#fbd774" /><path d="M4 11h14v7h-3.500v-3h-7v3H4z" fill="#3f8fe0" /></svg></Slot>
    <Slot $w={46}><svg width="23" height="22" viewBox="0 0 23 22"><path d="M0 0h23v22H0z" fill="#4d7fb5" /><path d="M0 0h12L8 6 0 8z" fill="#4da5e2" /><path d="M13 0h10v12l-7-3z" fill="#3c6ea5" /><path d="M2 8l5-5 8-1 5 4 2 9-6 6-10-1-4-6z" fill="#d8452c" /><circle cx="10" cy="8.500" r="3.500" fill="#f1c79b" /><path d="M14 5l6-3M3 13l8 2 9-5M2 20l8-4" stroke="#f0b73a" strokeWidth="1.800" fill="none" /><path d="M5 18l6-1 5 3H5z" fill="#8f2a1c" /></svg></Slot>
    <Slot $w={45} $on $open><svg width="22" height="22" viewBox="0 0 22 22"><circle cx="11" cy="11" r="10.500" fill="#fbc116" /><path d="M11 11L1.900 5.700A10.500 10.500 0 0 0 11 21.500l4.500-8z" fill="#2da94f" /><path d="M11 11L1.900 5.700A10.500 10.500 0 0 1 20.300 6.200H11z" fill="#e33b2e" /><circle cx="11" cy="11" r="5" fill="#fff" /><circle cx="11" cy="11" r="3.900" fill="#4285f4" /></svg></Slot>
    <Slot $w={46}><svg width="22" height="21" viewBox="0 0 22 21"><path d="M7 1h12l-4 18H1z" fill="#8fd0dc" stroke="#d9eef2" /><path d="M8 1.500l11-.5-1 3H7z" fill="#dff0f2" /><path d="M15.500 19L19 3l1.500 14z" fill="#4d8d9c" /></svg></Slot>
    <Slot $w={46} $open><svg width="21" height="18" viewBox="0 0 21 18"><path d="M.5.500h20v17H.5z" fill="#0a0a0a" stroke="#8d8d8d" /><path d="M1 1h19v2H1z" fill="#ddd" /><path d="M3 6l2 1.500L3 9M7 8.500h3M11.500 6v2.500M13 8.500h3" stroke="#fff" fill="none" /></svg></Slot>
    <Slot $w={46} $open><svg width="23" height="22" viewBox="0 0 23 22"><path d="M3 0h10l5 5v16H3z" fill="#f3f3f3" stroke="#aaa" strokeWidth=".7" /><path d="M9 10c0-2 5-2 6 0v3H9c-2 0-2 5 0 5" fill="none" stroke="#3b77a8" strokeWidth="3" /><path d="M19 11c3 1 2 5 0 5h-5v3c1 2 6 2 6 0" fill="none" stroke="#f9cd3b" strokeWidth="3" /></svg></Slot>
    <Slot $w={71} $pad={15}><Language>EN</Language></Slot>
    <svg width="23" height="17" viewBox="0 0 23 17"><path d="M1 1h17v14H1zM18 4h3.500v11H3" fill="none" stroke="#eee" strokeWidth="1.500" /><path d="M3.500 4.500h12M3.500 8h5v4h-5zM11 8h4.500M11 11.500h4.500" fill="none" stroke="#eee" strokeWidth="1.500" /></svg>
    <Slot $w={52}><News>Satis...</News></Slot>
    <Slot $w={38} $pad={2}><svg width="12" height="7" viewBox="0 0 10 6"><path d="M.5 5.500L5 1l4.500 4.500" fill="none" stroke="#eee" strokeWidth="1.100" /></svg></Slot>
    <svg width="14" height="10" viewBox="0 0 14 10"><path d="M.6.600h11v8.800H.6zM13.200 3v4" fill="none" stroke="#eee" strokeWidth="1.200" /><path d="M2 2h4v6H2z" fill="#eee" /></svg>
    <Slot $w={29}><svg width="16" height="14" viewBox="0 0 16 14"><path d="M.6 5h2.500l3-3v10l-3-3H.6zM8.500 4.500c1 1.500 1 3.500 0 5M10.800 2.800c2 2.500 2 6 0 8.400M13 1c3 3.500 3 8.500 0 12" fill="none" stroke="#ddd" strokeWidth="1.100" /></svg></Slot>
    <Slot $w={20}><svg width="12" height="14" viewBox="0 0 12 14"><path d="M.5 13C.5 6 5 1.500 12 1M3.500 13c0-5 3.500-8.500 8.500-9M6.500 13c0-3.500 2-5.500 5.500-6M9.500 13c0-2 1-3 2.500-3" fill="none" stroke="#bbb" strokeWidth="1.100" /></svg></Slot>
    <Clock>07:43 PM<br />08-11-2022</Clock>
    <Slot $w={50}><svg width="24" height="26" viewBox="0 0 24 26"><path d="M1 4h15v13H9l-3.500 3.500V17H1z" fill="#f2f2f2" /><path d="M3.500 7.500h10M3.500 10.500h10M3.500 13.500h7" stroke="#3b2f28" /><circle cx="15.500" cy="17.500" r="7.500" fill="#3a3431" stroke="#8f8f8f" /><text x="15.500" y="21.500" fontSize="11" fill="#fff" textAnchor="middle">3</text></svg></Slot>
  </Taskbar>
);

export default function App() {
  return (
    <Desktop>
      <Global />
      <Browser />
      <Site />
      <WinBar />
    </Desktop>
  );
}
